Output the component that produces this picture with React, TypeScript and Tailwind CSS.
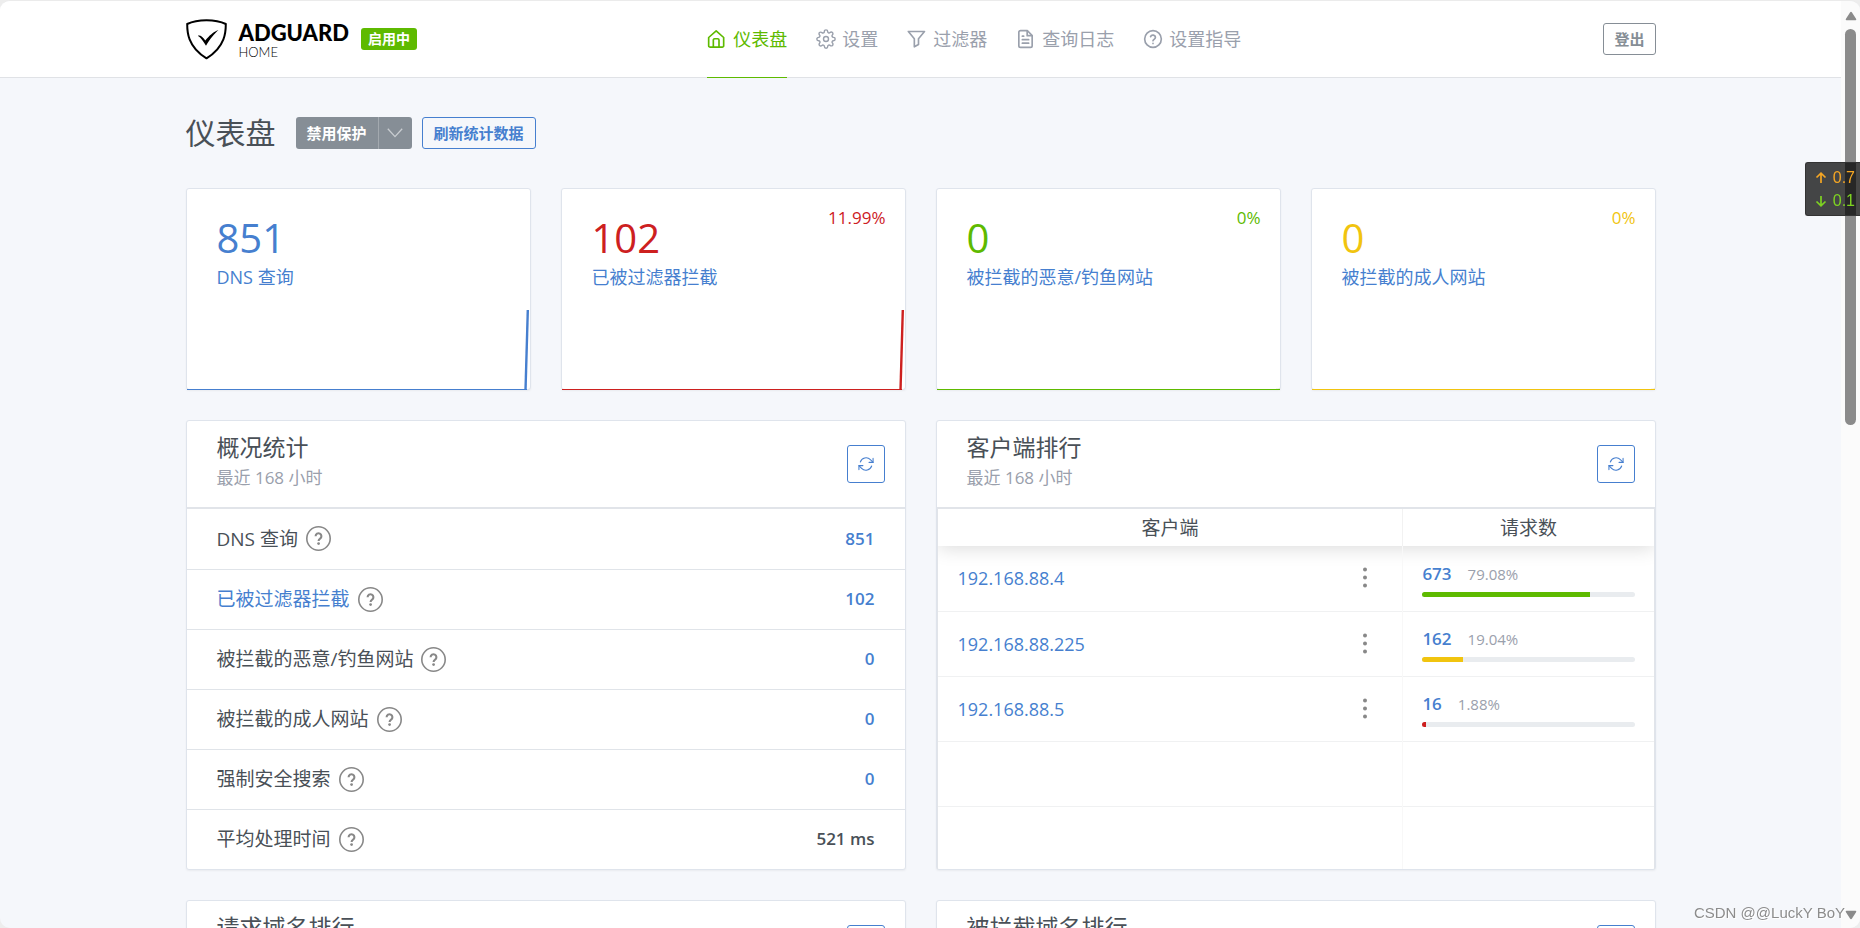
import type { ReactNode } from "react";

const FONT = "font-['Open_Sans','Noto_Sans_CJK_SC',sans-serif]";

type StrokeProps = { className?: string; children: ReactNode; width?: number };

function Stroke({ className = "size-5", children, width = 2 }: StrokeProps) {
  return (
    <svg
      viewBox="0 0 24 24"
      fill="none"
      stroke="currentColor"
      strokeWidth={width}
      strokeLinecap="round"
      strokeLinejoin="round"
      className={`shrink-0 ${className}`}
      aria-hidden="true"
    >
      {children}
    </svg>
  );
}

const HomeIcon = () => (
  <Stroke>
    <path d="M2 10.2 L11 2.2 L20 10.2 V20 a1.8 1.8 0 0 1 -1.8 1.8 H3.8 a1.8 1.8 0 0 1 -1.8 -1.8 Z" />
    <path d="M7.6 21.6 V13.2 a1.5 1.5 0 0 1 1.5 -1.5 h3.8 a1.5 1.5 0 0 1 1.5 1.5 V21.6" />
  </Stroke>
);

const GearIcon = () => (
  <Stroke width={1.7}>
    <circle cx="12" cy="12" r="3" />
    <path d="M19.4 15a1.65 1.65 0 0 0 .33 1.82l.06.06a2 2 0 0 1 0 2.83 2 2 0 0 1-2.83 0l-.06-.06a1.65 1.65 0 0 0-1.82-.33 1.65 1.65 0 0 0-1 1.51V21a2 2 0 0 1-2 2 2 2 0 0 1-2-2v-.09A1.65 1.65 0 0 0 9 19.4a1.65 1.65 0 0 0-1.82.33l-.06.06a2 2 0 0 1-2.83 0 2 2 0 0 1 0-2.83l.06-.06a1.65 1.65 0 0 0 .33-1.82 1.65 1.65 0 0 0-1.51-1H3a2 2 0 0 1-2-2 2 2 0 0 1 2-2h.09A1.65 1.65 0 0 0 4.6 9a1.65 1.65 0 0 0-.33-1.82l-.06-.06a2 2 0 0 1 0-2.83 2 2 0 0 1 2.83 0l.06.06a1.65 1.65 0 0 0 1.82.33H9a1.65 1.65 0 0 0 1-1.51V3a2 2 0 0 1 2-2 2 2 0 0 1 2 2v.09a1.65 1.65 0 0 0 1 1.51 1.65 1.65 0 0 0 1.82-.33l.06-.06a2 2 0 0 1 2.83 0 2 2 0 0 1 0 2.83l-.06.06a1.65 1.65 0 0 0-.33 1.82V9a1.65 1.65 0 0 0 1.51 1H21a2 2 0 0 1 2 2 2 2 0 0 1-2 2h-.09a1.65 1.65 0 0 0-1.51 1z" />
  </Stroke>
);

const FilterIcon = () => (
  <Stroke>
    <path d="M1.6 3 H21 L13.8 11.6 V18.6 L8.8 21.4 V11.6 Z" />
  </Stroke>
);

const LogIcon = () => (
  <Stroke>
    <path d="M13.6 2 H5.4 a2 2 0 0 0 -2 2 V20 a2 2 0 0 0 2 2 H17.4 a2 2 0 0 0 2 -2 V7.8 Z" />
    <path d="M13.4 2.2 V8 H19.2" />
    <path d="M7.6 8.6 H9.2 M7.6 12.8 H15.2 M7.6 17 H15.2" />
  </Stroke>
);

const GuideIcon = () => (
  <Stroke>
    <circle cx="12" cy="12" r="10" />
    <path d="M9.1 9.2a3 3 0 0 1 5.8 1c0 2-2.9 2.4-2.9 4" />
    <path d="M12 17.3h.01" />
  </Stroke>
);

const RefreshIcon = () => (
  <Stroke className="size-4" width={1.6}>
    <path d="M22.6 3.6 V9.6 H16.6" />
    <path d="M1.4 20.4 V14.4 H7.4" />
    <path d="M3.5 9 A9 9 0 0 1 18.6 5.6 L22.6 9.6" />
    <path d="M1.4 14.4 L5.4 18.4 A9 9 0 0 0 20.5 15" />
  </Stroke>
);

const HelpMark = () => (
  <svg viewBox="0 0 25 25" className="size-[25px] shrink-0 text-[#888]" fill="none" stroke="currentColor" aria-hidden="true">
    <circle cx="12.5" cy="12.5" r="11.7" strokeWidth="1.6" />
    <path d="M9.6 10.2 a2.9 2.9 0 1 1 4.5 2.4 c-1.1 .7 -1.5 1.1 -1.5 2.3" strokeWidth="2.1" />
    <circle cx="12.6" cy="17.6" r="1.4" fill="currentColor" stroke="none" />
  </svg>
);

const navItems = [
  { label: "仪表盘", icon: <HomeIcon />, active: true },
  { label: "设置", icon: <GearIcon />, active: false },
  { label: "过滤器", icon: <FilterIcon />, active: false },
  { label: "查询日志", icon: <LogIcon />, active: false },
  { label: "设置指导", icon: <GuideIcon />, active: false },
];

function Header() {
  return (
    <header className="border-b border-[#e0e2e6] bg-white">
      <div className="mx-auto grid h-[76px] max-w-[1500px] grid-cols-[minmax(0,1.26fr)_auto_minmax(0,1fr)] items-center px-[15px]">
        <div className="flex items-center">
          <a href="#" className="flex items-center gap-3 text-black" aria-label="AdGuard Home">
            <svg viewBox="0 0 41 41" className="size-[41px]" fill="none" aria-hidden="true">
              <path
                d="M20.5 1.2 C14 1.2 6.500 2.400 1.200 5 C1.200 11.500 1 27.500 20.500 39.300 C40 27.500 39.800 11.500 39.800 5 C34.500 2.400 27 1.200 20.500 1.200 Z"
                stroke="#000"
                strokeWidth="2"
                strokeLinejoin="round"
              />
              <path d="M11.800 16.800 C14 15.800 16.300 17.400 19.300 21.400 C23 17 27.500 12.600 32.400 11 C28.400 14.600 23.500 20.800 20 26.800 C17.500 22.400 15 19 11.800 16.800 Z" fill="#000" />
            </svg>
            <span className="flex flex-col pt-1 font-[Lato,sans-serif]">
              <span className="text-[22px] leading-[22px] font-black">ADGUARD</span>
              <span className="text-[13px] leading-4 font-light">HOME</span>
            </span>
          </a>
          <span className="ml-3 rounded-[3px] bg-[#5eba00] px-[7px] text-sm leading-[22px] font-bold text-white">启用中</span>
        </div>
        <nav className="flex gap-[29px] self-stretch">
          {navItems.map((item) => (
            <a
              key={item.label}
              href="#"
              className={`-mb-px flex items-center gap-[6px] border-b text-lg leading-7 ${
                item.active ? "border-[#5eba00] text-[#5eba00]" : "border-transparent text-[#9aa0ac]"
              }`}
            >
              {item.icon}
              {item.label}
            </a>
          ))}
        </nav>
        <button type="button" className="h-8 justify-self-end rounded-[3px] border border-[#868e96] px-[10px] text-[15px] leading-5 font-bold text-[#868e96]">
          登出
        </button>
      </div>
    </header>
  );
}

type StatProps = { value: string; label: string; percent?: string; tone: string; spike: boolean };

function StatCard({ value, label, percent, tone, spike }: StatProps) {
  return (
    <section className={`flex h-[202px] flex-col rounded-[3px] border border-[#dfe4ec] bg-white shadow-[0_1px_2px_rgba(0,0,0,0.05)] ${tone}`}>
      <div className="flex flex-1 justify-between pt-4 pr-[19px] pl-[30px]">
        <div className="pt-2">
          <div className="text-[40px] leading-[50px]">{value}</div>
          <a href="#" className="block text-lg leading-7 text-[#467fcf]">
            {label}
          </a>
        </div>
        {percent && <div className="text-[17px] leading-[26px]">{percent}</div>}
      </div>
      <svg viewBox="0 0 344 80" preserveAspectRatio="none" className="-mb-px block h-20 w-full" fill="none" stroke="currentColor" aria-hidden="true">
        <path d="M0 79.500 H341" strokeWidth="1.200" />
        {spike ? <path d="M339.500 80 L341.800 0" strokeWidth="2.400" /> : <path d="M340 79.500 H344" strokeWidth="1.200" />}
      </svg>
    </section>
  );
}

const stats: StatProps[] = [
  { value: "851", label: "DNS 查询", tone: "text-[#467fcf]", spike: true },
  { value: "102", label: "已被过滤器拦截", percent: "11.99%", tone: "text-[#cd201f]", spike: true },
  { value: "0", label: "被拦截的恶意/钓鱼网站", percent: "0%", tone: "text-[#5eba00]", spike: false },
  { value: "0", label: "被拦截的成人网站", percent: "0%", tone: "text-[#f1c40f]", spike: false },
];

function Panel({ title, children }: { title: string; children?: ReactNode }) {
  return (
    <section className="flex flex-col rounded-[3px] border border-[#dfe4ec] bg-white shadow-[0_1px_2px_rgba(0,0,0,0.05)]">
      <div className="flex items-center justify-between border-b-2 border-[#e1e4e9] pr-5 pl-[30px]">
        <div className="pt-3 pb-4">
          <h2 className="text-[23px] leading-7 text-[#495057]">{title}</h2>
          <p className="pt-1 text-[17px] leading-[26px] text-[#9aa0ac]">最近 168 小时</p>
        </div>
        <button type="button" aria-label="刷新" className="flex size-[38px] items-center justify-center rounded-[3px] border border-[#467fcf] text-[#467fcf]">
          <RefreshIcon />
        </button>
      </div>
      {children}
    </section>
  );
}

const summary = [
  { label: "DNS 查询", value: "851", link: false },
  { label: "已被过滤器拦截", value: "102", link: true },
  { label: "被拦截的恶意/钓鱼网站", value: "0", link: false },
  { label: "被拦截的成人网站", value: "0", link: false },
  { label: "强制安全搜索", value: "0", link: false },
  { label: "平均处理时间", value: "521 ms", link: false },
];

function SummaryTable() {
  return (
    <table className="w-full text-[#495057]">
      <tbody>
        {summary.map((row) => (
          <tr key={row.label} className="h-[60px] border-b border-[#e0e4e9] last:border-b-0">
            <td className="py-0 pl-[30px]">
              <div className="flex items-center gap-2 text-[19px] leading-7">
                {row.link ? (
                  <a href="#" className="text-[#467fcf]">
                    {row.label}
                  </a>
                ) : (
                  <span>{row.label}</span>
                )}
                <HelpMark />
              </div>
            </td>
            <td className="pr-[30px] text-right text-[17px] leading-7 font-semibold">
              {row.value.endsWith("ms") ? (
                row.value
              ) : (
                <a href="#" className="text-[#467fcf]">
                  {row.value}
                </a>
              )}
            </td>
          </tr>
        ))}
      </tbody>
    </table>
  );
}

const clients = [
  { ip: "192.168.88.4", count: "673", percent: 79.08, color: "bg-[#5eba00]" },
  { ip: "192.168.88.225", count: "162", percent: 19.04, color: "bg-[#f1c40f]" },
  { ip: "192.168.88.5", count: "16", percent: 1.88, color: "bg-[#cd201f]" },
];

function ClientsTable() {
  return (
    <div className="flex-1 overflow-hidden border-x border-[#e1e4e9]">
      <table className="w-full table-fixed text-[#495057]">
        <colgroup>
          <col className="w-[65%]" />
          <col className="w-[35%]" />
        </colgroup>
        <thead className="bg-white shadow-[0_2px_19px_0_rgba(0,0,0,0.15)]">
          <tr className="h-[37px] text-[19px] leading-7">
            <th className="border-r border-[#f2f2f2] p-0 font-normal">客户端</th>
            <th className="p-0 font-normal">请求数</th>
          </tr>
        </thead>
        <tbody>
          {clients.map((client) => (
            <tr key={client.ip} className="h-[65px] border-b border-[#f0f1f2]">
              <td className="border-r border-[#f8f8f8] py-0 pr-[27px] pl-5">
                <div className="flex items-center justify-between">
                  <a href="#" className="text-lg leading-7 text-[#467fcf]">
                    {client.ip}
                  </a>
                  <button type="button" aria-label="更多" className="flex h-8 w-5 items-center justify-center">
                    <svg viewBox="0 0 4 22" className="h-[22px] w-1 text-[#888]" fill="currentColor" aria-hidden="true">
                      <circle cx="2" cy="2.500" r="2" />
                      <circle cx="2" cy="10.500" r="2" />
                      <circle cx="2" cy="18.500" r="2" />
                    </svg>
                  </button>
                </div>
              </td>
              <td className="py-0 pr-[19px] pl-[19px]">
                <div className="flex items-baseline gap-4 leading-7">
                  <a href="#" className="text-[17px] font-semibold text-[#467fcf]">
                    {client.count}
                  </a>
                  <span className="text-[15px] text-[#9aa0ac]">{client.percent}%</span>
                </div>
                <div className="mt-1 h-[5px] overflow-hidden rounded-[3px] bg-[#e9ecef]">
                  <div className={`h-full ${client.color}`} style={{ width: `${client.percent}%` }} />
                </div>
              </td>
            </tr>
          ))}
          <tr className="h-[65px] border-b border-[#f0f1f2]">
            <td className="border-r border-[#f8f8f8]" />
            <td />
          </tr>
          <tr className="h-[63px]">
            <td className="border-r border-[#f8f8f8]" />
            <td />
          </tr>
        </tbody>
      </table>
    </div>
  );
}

function Scrollbar() {
  return (
    <div className="flex w-[19px] shrink-0 flex-col items-center bg-[#fbfbfb] pt-[10px] pb-2 text-[#8b8b8b]" aria-hidden="true">
      <svg viewBox="0 0 12 10" className="h-[10px] w-3" fill="currentColor">
        <path d="M6 .8 Q6.600 .8 7 1.500 L11.200 8 Q11.600 9.200 10.400 9.200 H1.600 Q.4 9.200 .8 8 L5 1.500 Q5.400 .8 6 .8 Z" />
      </svg>
      <div className="mt-2 flex-1">
        <div className="h-[45%] w-[11px] rounded-full bg-[#8b8b8b]" />
      </div>
      <svg viewBox="0 0 12 10" className="h-[10px] w-3" fill="currentColor">
        <path d="M6 9.200 Q6.600 9.200 7 8.500 L11.200 2 Q11.600 .8 10.400 .8 H1.600 Q.4 .8 .8 2 L5 8.500 Q5.400 9.200 6 9.200 Z" />
      </svg>
    </div>
  );
}

function SpeedWidget() {
  return (
    <div className="fixed top-[162px] right-0 rounded-l-[3px] border border-r-0 border-[#333] bg-black/72 py-[3px] pr-[5px] pl-[9px] font-['Liberation_Sans',sans-serif] text-base leading-[23px]">
      {[
        { value: "0.7", tone: "text-[#f5a623]", d: "M6 11 V1.500 M1.500 5.500 L6 1.200 L10.500 5.500" },
        { value: "0.1", tone: "text-[#7ed321]", d: "M6 1 V10.500 M1.500 6.500 L6 10.800 L10.500 6.500" },
      ].map((row) => (
        <div key={row.value} className={`flex items-center gap-[6px] ${row.tone}`}>
          <svg viewBox="0 0 12 12" className="size-3" fill="none" stroke="currentColor" strokeWidth="1.700" aria-hidden="true">
            <path d={row.d} />
          </svg>
          {row.value}
        </div>
      ))}
    </div>
  );
}

export default function App() {
  return (
    <div className={`h-screen bg-[#ededed] ${FONT}`}>
      <div className="flex h-full overflow-hidden rounded-[10px] border-t border-[#ebebeb] bg-[#f5f7fb]">
        <div className="min-w-0 flex-1 overflow-hidden">
          <Header />
          <main className="mx-auto max-w-[1500px] px-[15px]">
            <div className="flex items-center pt-[37px] pb-[37px]">
              <h1 className="text-[30px] leading-9 text-[#495057]">仪表盘</h1>
              <div className="ml-5 flex h-8 overflow-hidden rounded-[3px] bg-[#868e96] text-white">
                <button type="button" className="border-r border-[#a3a9af] px-[11px] text-[15px] leading-5 font-bold">
                  禁用保护
                </button>
                <button type="button" aria-label="选项" className="flex w-[33px] items-center justify-center">
                  <svg viewBox="0 0 16 10" className="h-[10px] w-4" fill="none" stroke="#c9cdd1" strokeWidth="1.300" aria-hidden="true">
                    <path d="M.8 .8 L8 8.600 L15.200 .8" />
                  </svg>
                </button>
              </div>
              <button type="button" className="ml-[10px] h-8 rounded-[3px] border border-[#467fcf] px-[11px] text-[15px] leading-5 font-bold text-[#467fcf]">
                刷新统计数据
              </button>
            </div>
            <div className="grid grid-cols-4 gap-[30px]">
              {stats.map((stat) => (
                <StatCard key={stat.label} {...stat} />
              ))}
            </div>
            <div className="grid grid-cols-2 gap-[30px] pt-[30px]">
              <Panel title="概况统计">
                <SummaryTable />
              </Panel>
              <Panel title="客户端排行">
                <ClientsTable />
              </Panel>
              <Panel title="请求域名排行" />
              <Panel title="被拦截域名排行" />
            </div>
          </main>
        </div>
        <Scrollbar />
      </div>
      <SpeedWidget />
      <div className="fixed right-[15px] bottom-1 font-['Liberation_Sans',sans-serif] text-[15px] leading-[22px] text-[#8c8c8c] [text-shadow:1px_1px_0_#ffffff]">
        CSDN @@LuckY BoY
      </div>
    </div>
  );
}
